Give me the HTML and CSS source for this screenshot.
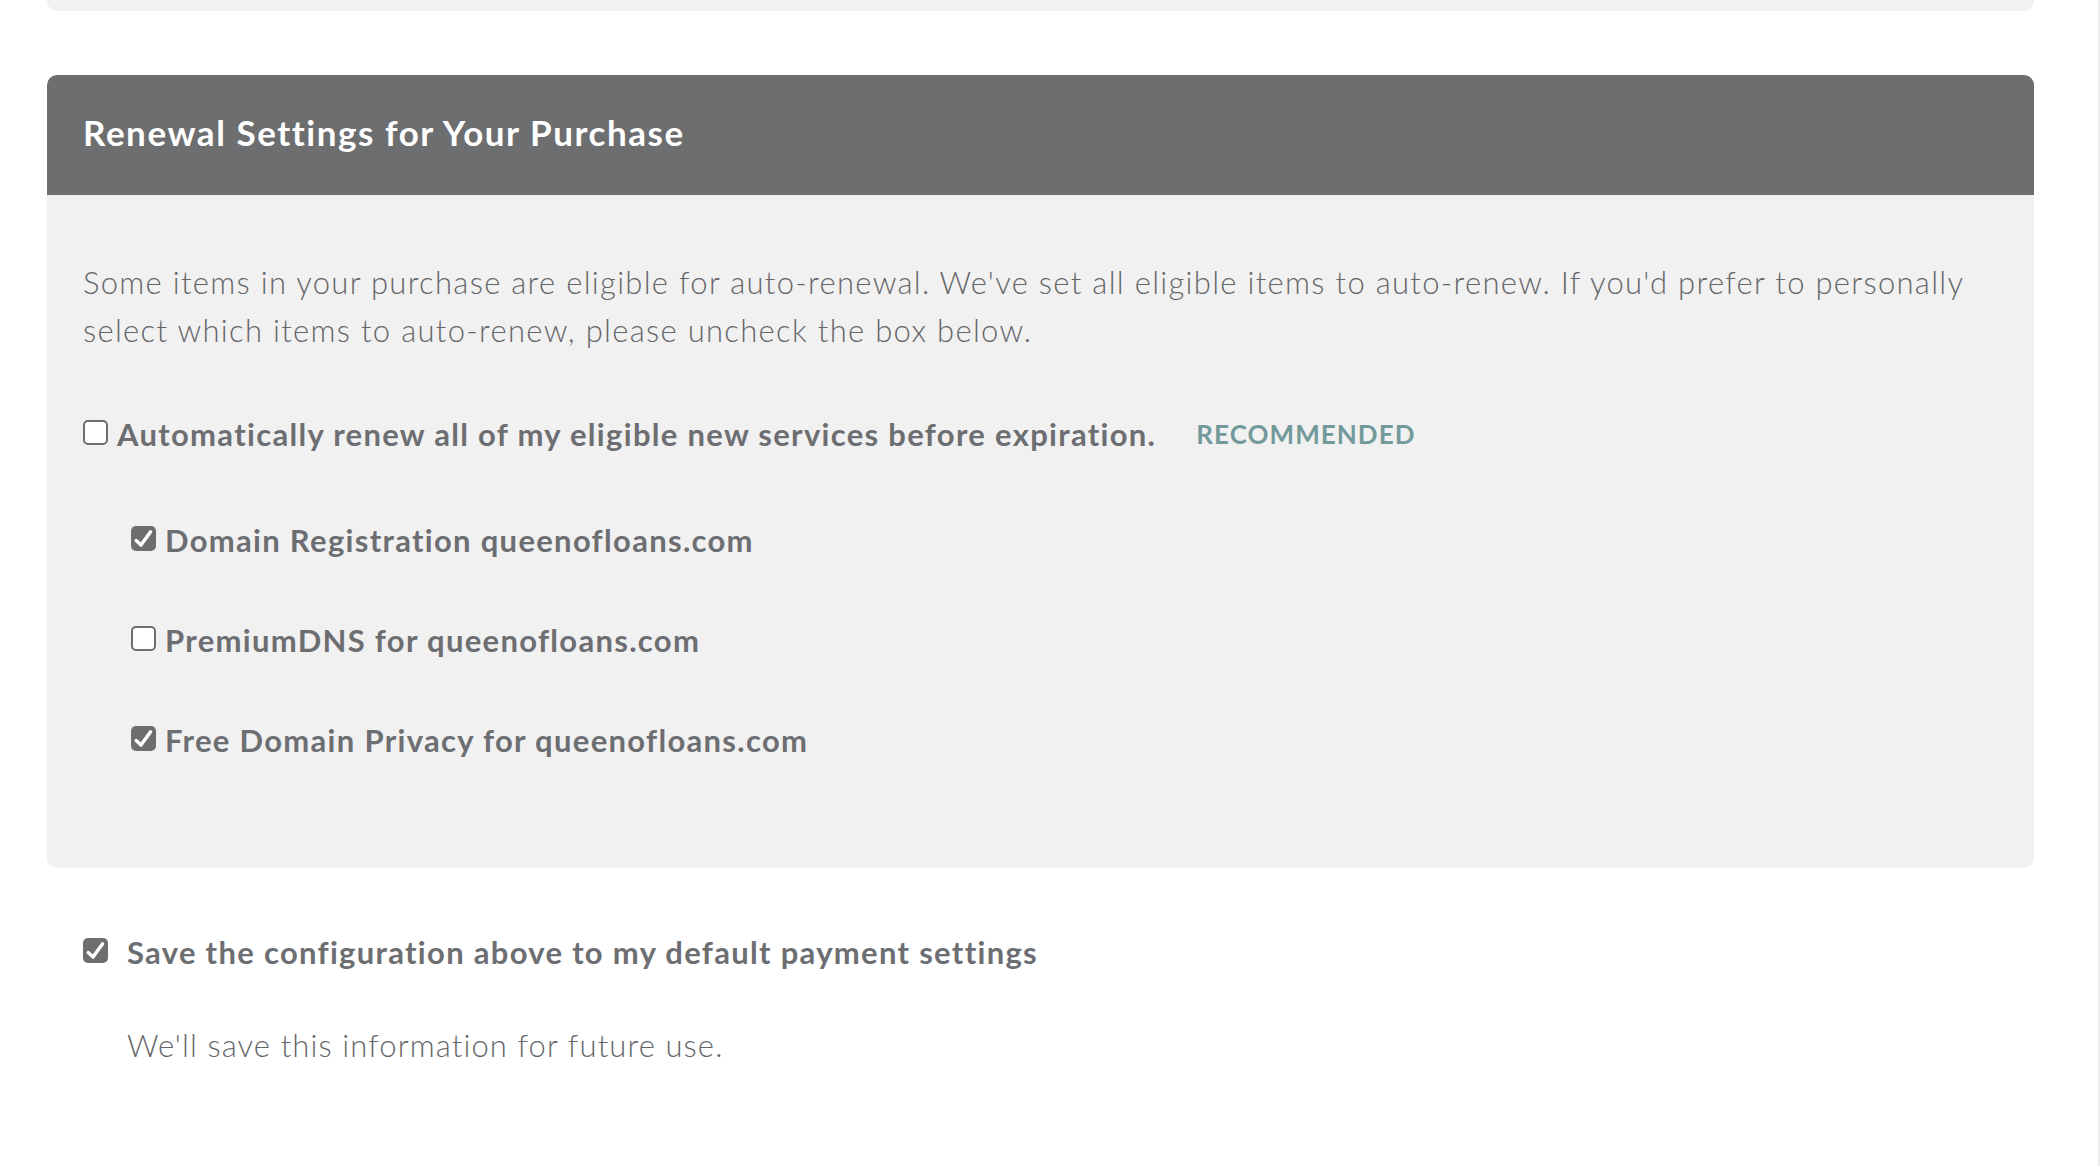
FILE: index.html
```html
<!DOCTYPE html>
<html lang="en">
<head>
<meta charset="utf-8">
<title>Renewal Settings</title>
<link rel="stylesheet" href="styles.css">
</head>
<body>
<div class="page">
  <div class="prev-card"></div>
  <section class="panel">
    <header class="panel-header">
      <h2 class="panel-title">Renewal Settings for Your Purchase</h2>
    </header>
    <div class="panel-body">
      <p class="intro">Some items in your purchase are eligible for auto-renewal. We've set all eligible items to auto-renew. If you'd prefer to personally select which items to auto-renew, please uncheck the box below.</p>
      <div class="row row-main">
        <span class="cb"></span>
        <span class="label">Automatically renew all of my eligible new services before expiration.</span>
        <span class="badge">RECOMMENDED</span>
      </div>
      <div class="row row-sub row-first">
        <span class="cb cb-checked"><svg viewBox="0 0 25 25"><path d="M5.2 14.6l4.8 4.4 9.6-13.2" /></svg></span>
        <span class="label">Domain Registration queenofloans.com</span>
      </div>
      <div class="row row-sub">
        <span class="cb"></span>
        <span class="label">PremiumDNS for queenofloans.com</span>
      </div>
      <div class="row row-sub">
        <span class="cb cb-checked"><svg viewBox="0 0 25 25"><path d="M5.2 14.6l4.8 4.4 9.6-13.2" /></svg></span>
        <span class="label">Free Domain Privacy for queenofloans.com</span>
      </div>
    </div>
  </section>
  <div class="save">
    <div class="row row-save">
      <span class="cb cb-checked"><svg viewBox="0 0 25 25"><path d="M5.2 14.6l4.8 4.4 9.6-13.2" /></svg></span>
      <span class="label">Save the configuration above to my default payment settings</span>
    </div>
    <p class="note">We'll save this information for future use.</p>
  </div>
</div>
</body>
</html>
```

FILE: styles.css
```css
* { box-sizing: border-box; }
html, body { margin: 0; padding: 0; background: #ffffff; }
body {
  font-family: Lato, "Open Sans", "Liberation Sans", sans-serif;
  color: #6d6e71;
  border-right: 2px solid #ececec;
  min-height: 1166px;
}
.page {
  padding: 0 64px 0 47px;
}
.prev-card {
  height: 11px;
  background: #f1f1f1;
  border-radius: 0 0 10px 10px;
}
.panel {
  margin-top: 64px;
  background: #f1f1f1;
  border-radius: 10px;
  overflow: hidden;
}
.panel-header {
  height: 120px;
  background: #6d6e70;
  display: flex;
  align-items: center;
  padding: 0 36px 6px;
}
.panel-title {
  margin: 0;
  color: #ffffff;
  font-size: 35px;
  font-weight: 700;
  letter-spacing: 1.55px;
}
.panel-body {
  padding: 63px 36px 104px;
}
.intro {
  margin: 0;
  font-size: 31px;
  font-weight: 300;
  line-height: 48px;
  letter-spacing: 1.3px;
  color: #656669;
}
.row {
  display: flex;
  align-items: center;
  height: 48px;
}
.row-main { margin-top: 56px; }
.row-sub { margin-left: 48px; margin-top: 52px; }
.row-sub.row-first { margin-top: 58px; }
.label {
  font-size: 31px;
  font-weight: 700;
  letter-spacing: 1.3px;
  color: #6d6e71;
  white-space: nowrap;
}
.cb {
  flex: none;
  width: 25px;
  height: 25px;
  border: 2px solid #6d6e70;
  border-radius: 5px;
  background: #ffffff;
  margin-right: 9px;
  display: flex;
  position: relative;
  top: -2px;
}
.cb-checked {
  background: #6d6e70;
  border: 0;
}
.cb svg {
  width: 25px;
  height: 25px;
  fill: none;
  stroke: #ffffff;
  stroke-width: 3.4;
  stroke-linecap: round;
  stroke-linejoin: round;
}
.badge {
  margin-left: 40px;
  font-size: 26px;
  font-weight: 700;
  color: #739a9a;
  letter-spacing: 1.05px;
}
.save {
  padding: 60px 36px 0;
}
.row-save .cb { margin-right: 19px; }
.note {
  margin: 45px 0 0 44px;
  font-size: 31px;
  font-weight: 300;
  line-height: 48px;
  letter-spacing: 1.1px;
  color: #656669;
}
```
